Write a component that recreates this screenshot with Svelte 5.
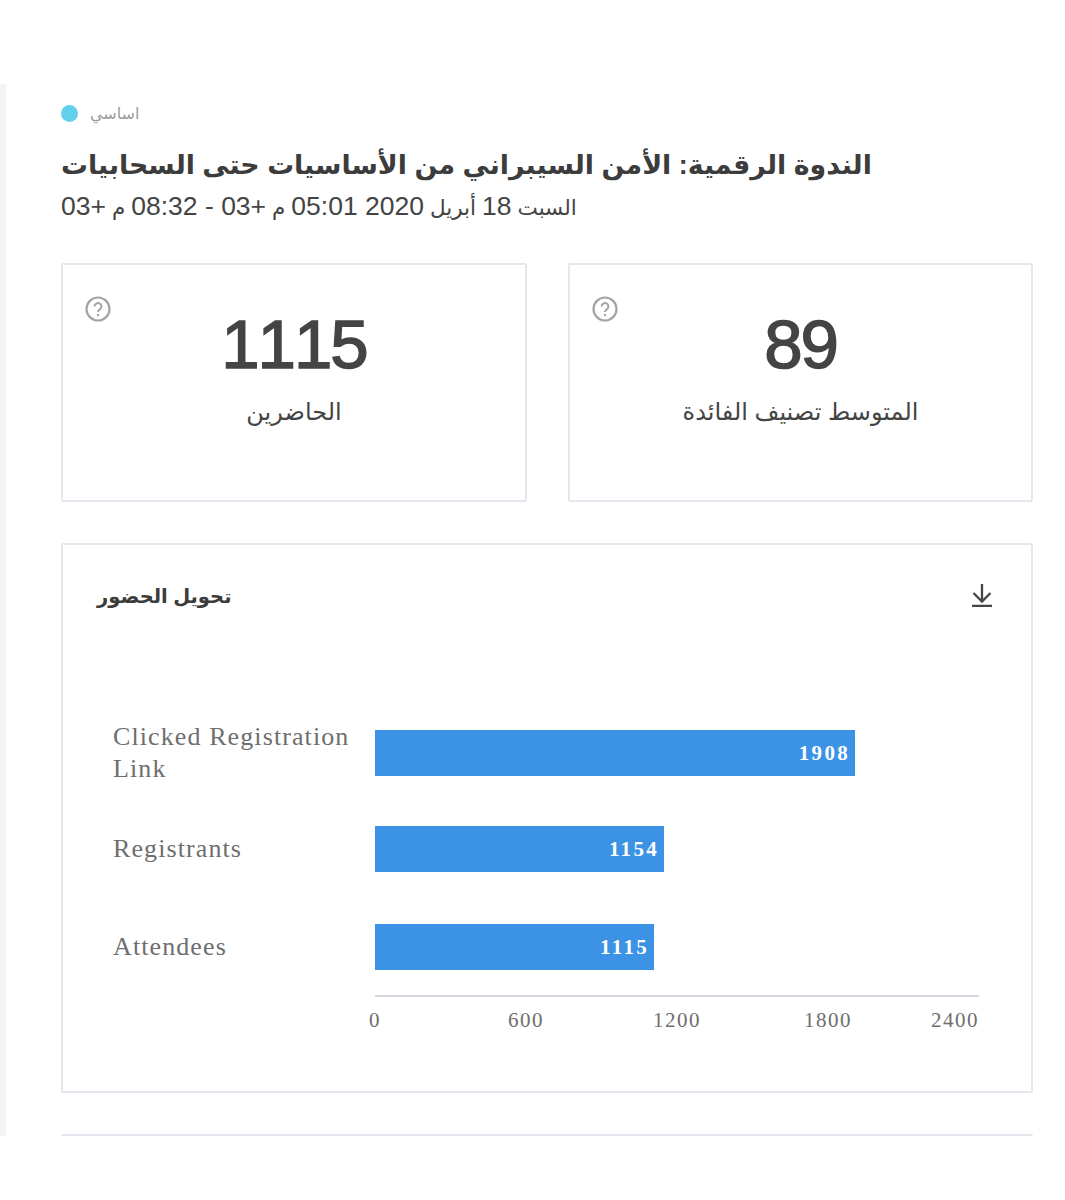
<script>
  const rows = [
    { label: 'Clicked Registration Link', value: 1908, width: 480 },
    { label: 'Registrants', value: 1154, width: 289 },
    { label: 'Attendees', value: 1115, width: 279 }
  ];
  const ticks = [0, 600, 1200, 1800, 2400];
  const stats = [
    { value: '1115', label: 'الحاضرين' },
    { value: '89', label: 'المتوسط تصنيف الفائدة' }
  ];
</script>

<div class="page">
  <main class="content">
    <div class="status">
      <span class="dot"></span>
      <span class="status-text">اساسي</span>
    </div>
    <h1>الندوة الرقمية: الأمن السيبراني من الأساسيات حتى السحابيات</h1>
    <p class="date"><span class="date-inner" dir="rtl">السبت <b>18</b> أبريل <b>2020 05:01</b> م <b>+03 - 08:32</b> م <b>+03</b></span></p>

    <section class="stats">
      {#each stats as s}
        <div class="card stat">
          <svg class="help" viewBox="0 0 26 26" width="26" height="26" aria-hidden="true">
            <circle cx="13" cy="13" r="11.5" fill="none" stroke="#a4a4a8" stroke-width="2.2" />
            <path d="M9.6 10.400a3.400 3.400 0 1 1 5.400 2.800c-1.200.8-2 1.400-2 2.800" fill="none" stroke="#a4a4a8" stroke-width="2" />
            <circle cx="13" cy="19" r="1.200" fill="#a4a4a8" />
          </svg>
          <div class="value">{s.value}</div>
          <div class="label">{s.label}</div>
        </div>
      {/each}
    </section>

    <section class="card chart">
      <header>
        <h2>تحويل الحضور</h2>
        <svg viewBox="0 0 22 24" width="22" height="24" aria-hidden="true">
          <path d="M11 1v17.500M2.500 10l8.500 8.500 8.500-8.500M1 23h20" fill="none" stroke="#444" stroke-width="2.300" />
        </svg>
      </header>
      <div class="rows">
        {#each rows as r}
          <div class="row">
            <div class="row-label">{r.label}</div>
            <div class="track">
              <div class="bar" style="width: {r.width}px">{r.value}</div>
            </div>
          </div>
        {/each}
      </div>
      <div class="axis">
        {#each ticks as t}<span>{t}</span>{/each}
      </div>
    </section>

    <div class="next-card"></div>
  </main>
</div>

<style>
  :global(body) {
    margin: 0;
    background: #fff;
  }
  .page {
    height: 1200px;
    padding-top: 84px;
    box-sizing: border-box;
    font-family: "Liberation Sans", "DejaVu Sans", sans-serif;
    color: #444;
  }
  .content {
    height: 1052px;
    overflow: hidden;
    box-sizing: border-box;
    border-left: 6px solid #f4f4f5;
    padding: 19px 32px 0 55px;
  }
  .status {
    display: flex;
    align-items: center;
    gap: 12px;
    height: 20px;
  }
  .dot {
    width: 17px;
    height: 17px;
    border-radius: 50%;
    background: #62d0ec;
  }
  .status-text {
    font-size: 16px;
    color: #9a9a9a;
  }
  h1 {
    margin: 22px 0 0;
    font-size: 26.800px;
    line-height: 40px;
    font-weight: 700;
    color: #3c3c3c;
  }
  .date {
    margin: 6px 0 0;
    font-size: 21.500px;
    line-height: 30px;
    color: #444;
  }
  .date-inner {
    display: inline-block;
  }
  .date b {
    font-size: 26.500px;
    font-weight: 400;
  }
  .stats {
    display: grid;
    grid-template-columns: 466px 465px;
    justify-content: space-between;
    margin-top: 40px;
  }
  .card {
    border: 2px solid #e6e7ee;
    border-radius: 2px;
    box-sizing: border-box;
  }
  .stat {
    height: 239px;
    position: relative;
    text-align: center;
    padding-top: 41px;
  }
  .help {
    position: absolute;
    left: 22px;
    top: 31px;
  }
  .value {
    font-size: 69px;
    font-kerning: none;
    letter-spacing: -2px;
    -webkit-text-stroke: 1.500px #444;
    line-height: 78px;
    color: #444;
  }
  .label {
    margin-top: 10px;
    font-size: 24px;
    line-height: 36px;
    color: #444;
  }
  .chart {
    height: 550px;
    margin-top: 41px;
    padding: 36px 38px 0 50px;
  }
  header {
    display: flex;
    justify-content: space-between;
    align-items: center;
    margin-left: -16px;
    height: 30px;
  }
  header svg {
    margin-top: -3px;
  }
  h2 {
    margin: 0;
    font-size: 19.500px;
    font-weight: 700;
    line-height: 30px;
    color: #3c3c3c;
  }
  .rows {
    margin-top: 119px;
    display: flex;
    flex-direction: column;
    gap: 50px;
  }
  .row {
    display: grid;
    grid-template-columns: 262px 604px;
    grid-template-rows: 46px;
    align-items: center;
  }
  .row:last-child {
    margin-top: 2px;
  }
  .row-label {
    width: 245px;
    font-family: "Liberation Serif", serif;
    font-size: 26px;
    line-height: 32px;
    letter-spacing: 1.100px;
    color: #6e6e6e;
  }
  .bar {
    height: 46px;
    box-sizing: border-box;
    background: #3c92e4;
    color: #fff;
    text-align: right;
    padding-right: 5px;
    font-family: "Liberation Serif", serif;
    font-size: 21px;
    font-weight: 700;
    line-height: 46px;
    letter-spacing: 2.300px;
  }
  .axis {
    margin: 25px 0 0 262px;
    width: 604px;
    box-sizing: border-box;
    border-top: 2px solid #d6d6de;
    display: flex;
    justify-content: space-between;
    padding-top: 11px;
    font-family: "Liberation Serif", serif;
    font-size: 21px;
    line-height: 24px;
    letter-spacing: 1.500px;
    color: #6e6e6e;
  }
  .axis span {
    width: 0;
    display: flex;
    justify-content: center;
    white-space: nowrap;
  }
  .axis span:last-child {
    justify-content: flex-end;
  }
  .next-card {
    margin-top: 41px;
    height: 60px;
    border: 2px solid #e6e7ee;
    border-radius: 2px;
  }
</style>
